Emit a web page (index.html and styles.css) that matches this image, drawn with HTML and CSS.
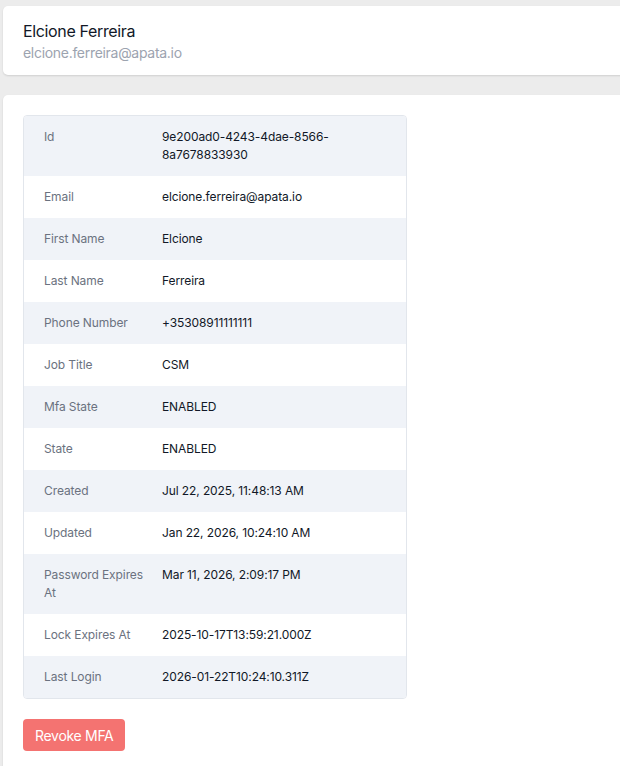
FILE: index.html
```html
<!DOCTYPE html>
<html>
<head>
<meta charset="utf-8">
<link rel="stylesheet" href="styles.css">
</head>
<body>
<div class="page">
  <header class="card head">
    <div class="name">Elcione Ferreira</div>
    <div class="email">elcione.ferreira@apata.io</div>
  </header>
  <section class="card body">
    <dl class="details">
      <div class="row"><dt>Id</dt><dd>9e200ad0-4243-4dae-8566-8a7678833930</dd></div>
      <div class="row"><dt>Email</dt><dd>elcione.ferreira@apata.io</dd></div>
      <div class="row"><dt>First Name</dt><dd>Elcione</dd></div>
      <div class="row"><dt>Last Name</dt><dd>Ferreira</dd></div>
      <div class="row"><dt>Phone Number</dt><dd>+35308911111111</dd></div>
      <div class="row"><dt>Job Title</dt><dd>CSM</dd></div>
      <div class="row"><dt>Mfa State</dt><dd>ENABLED</dd></div>
      <div class="row"><dt>State</dt><dd>ENABLED</dd></div>
      <div class="row"><dt>Created</dt><dd>Jul 22, 2025, 11:48:13 AM</dd></div>
      <div class="row"><dt>Updated</dt><dd>Jan 22, 2026, 10:24:10 AM</dd></div>
      <div class="row"><dt>Password Expires At</dt><dd>Mar 11, 2026, 2:09:17 PM</dd></div>
      <div class="row"><dt>Lock Expires At</dt><dd>2025-10-17T13:59:21.000Z</dd></div>
      <div class="row"><dt>Last Login</dt><dd>2026-01-22T10:24:10.311Z</dd></div>
    </dl>
    <button class="btn-danger">Revoke MFA</button>
  </section>
</div>
</body>
</html>
```
FILE: styles.css
```css
html, body {
  margin: 0;
  padding: 0;
  background: #ececec;
  font-family: Inter, "Noto Sans", sans-serif;
  overflow: hidden;
}
.page {
  box-sizing: border-box;
  height: 100vh;
  padding: 6px 0 0 3px;
  display: flex;
  flex-direction: column;
  gap: 20px;
}
.card {
  background: #fff;
  border-radius: 5px 0 0 5px;
  margin-right: -10px;
  box-shadow: 0 1px 2px rgba(0,0,0,0.12);
}
.head {
  padding: 13px 20px 12px;
}
.name {
  font-size: 16px;
  line-height: 24px;
  color: #111827;
  letter-spacing: -0.35px;
}
.email {
  font-size: 14px;
  line-height: 20px;
  color: #9ca3af;
  letter-spacing: -0.3px;
}
.body {
  flex: 1;
  padding: 20px;
  border-radius: 5px 0 0 0;
}
.details {
  margin: 0;
  width: 382px;
  border: 1px solid #e2e6ec;
  border-radius: 4px;
  overflow: hidden;
}
.row {
  display: grid;
  grid-template-columns: 104px 1fr;
  column-gap: 14px;
  padding: 12px 20px;
  font-size: 12px;
  line-height: 18px;
  letter-spacing: -0.1px;
}
.row:nth-child(odd) {
  background: #f0f3f8;
}
.row:nth-child(even) {
  background: #fff;
}
dt {
  color: #6b7280;
}
dd {
  margin: 0;
  color: #111827;
  max-width: 170px;
}
.btn-danger {
  margin-top: 20px;
  height: 32px;
  padding: 0 12px;
  border: none;
  border-radius: 4px;
  background: #f47371;
  color: #fff;
  font-family: Inter, "Noto Sans", sans-serif;
  font-size: 14px;
  letter-spacing: -0.3px;
}
```
